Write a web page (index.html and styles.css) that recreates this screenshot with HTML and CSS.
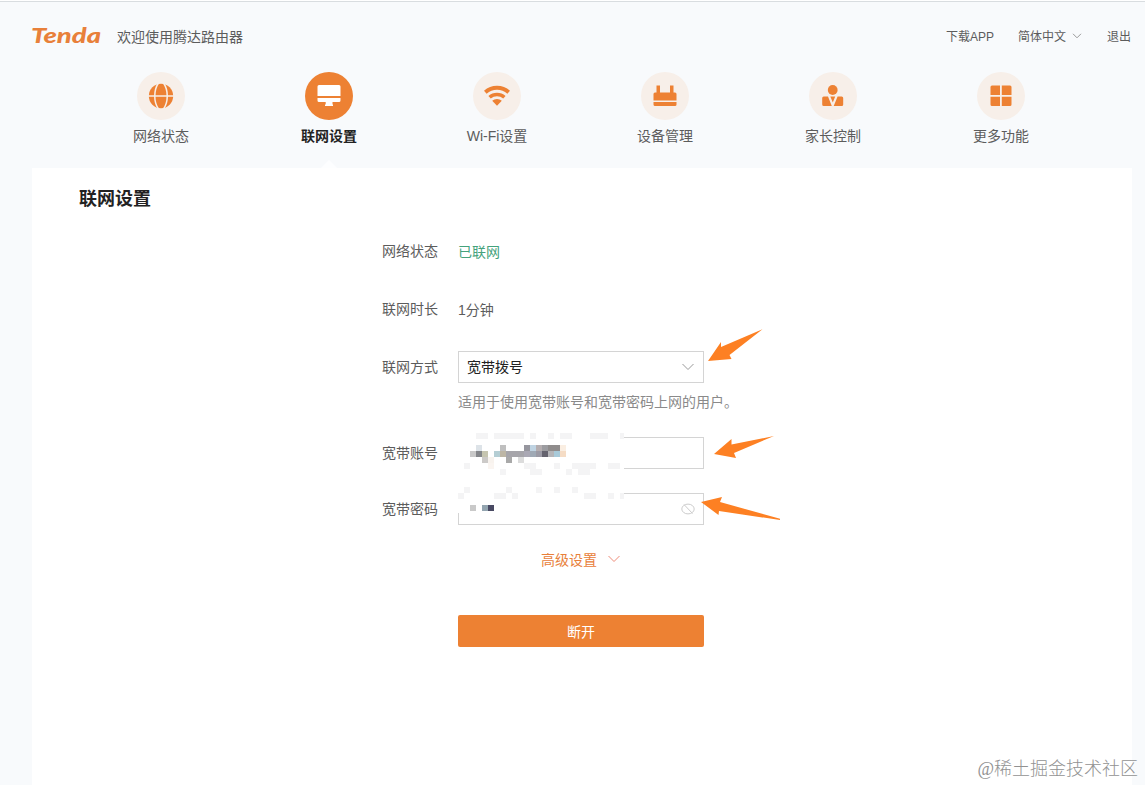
FILE: index.html
```html
<!DOCTYPE html>
<html lang="zh-CN">
<head>
    <meta charset="UTF-8">
    <title>Tenda</title>
    <link rel="stylesheet" href="styles.css">
</head>
<body>
    <header class="header">
        <svg class="logo" width="72" height="22" viewBox="0 0 72 22">
            <text x="0" y="18" textLength="70" lengthAdjust="spacingAndGlyphs">Tenda</text>
        </svg>
        <span class="welcome">欢迎使用腾达路由器</span>
        <div class="header-links">
            <a class="link-app">下载APP</a>
            <a class="link-lang">简体中文
                <svg width="10" height="6" viewBox="0 0 10 6"><path d="M1 .8l4 4 4-4"/></svg>
            </a>
            <a class="link-exit">退出</a>
        </div>
    </header>

    <nav class="nav">
        <a class="nav-item">
            <span class="nav-icon">
                <svg width="26" height="26" viewBox="0 0 26 26">
                    <circle cx="13" cy="13" r="12.2" fill="#ed8133"/>
                    <path d="M0 13h26M10.500 0C5.500 7 5.500 19 10.500 26M15.500 0C20.500 7 20.500 19 15.500 26" fill="none" stroke="#f7efe9" stroke-width="1.500"/>
                </svg>
            </span>
            <span class="nav-text">网络状态</span>
        </a>
        <a class="nav-item active">
            <span class="nav-icon">
                <svg width="26" height="26" viewBox="0 0 26 26" fill="#fff">
                    <path d="M3 2h20a1.500 1.500 0 0 1 1.500 1.500V13h-23V3.500A1.500 1.500 0 0 1 3 2zM1.500 15h23v2.500A1.500 1.500 0 0 1 23 19h-6.500v2.500h.5v1.500H9v-1.500h.7V19H3a1.500 1.500 0 0 1-1.500-1.500z"/>
                </svg>
            </span>
            <span class="nav-text">联网设置</span>
        </a>
        <a class="nav-item">
            <span class="nav-icon">
                <svg width="26" height="26" viewBox="0 0 26 26" fill="none" stroke="#ed8133">
                    <path d="M1.300 9.300a17.500 17.500 0 0 1 23.400 0" stroke-width="4"/>
                    <path d="M5.600 14.300a11 11 0 0 1 14.800 0" stroke-width="3.500"/>
                    <path d="M8.200 17.800a7 7 0 0 1 9.600 0L13 22.800z" fill="#ed8133" stroke="none"/>
                </svg>
            </span>
            <span class="nav-text">Wi-Fi设置</span>
        </a>
        <a class="nav-item">
            <span class="nav-icon">
                <svg width="26" height="26" viewBox="0 0 26 26" fill="#ed8133">
                    <path d="M4.500 2.500h3.500V9.500h10V2.500h3.500V9.500h1.500q1.500 0 1.500 1.500v6.500h-23V11q0-1.500 1.500-1.500h1.500zM1.500 19h23v2.500q0 1.500-1.500 1.500H3q-1.500 0-1.500-1.500z"/>
                </svg>
            </span>
            <span class="nav-text">设备管理</span>
        </a>
        <a class="nav-item">
            <span class="nav-icon">
                <svg width="26" height="26" viewBox="0 0 26 26" fill="#ed8133">
                    <circle cx="12.700" cy="7" r="4.900"/>
                    <path d="M3.700 13.500h4.300l3.800 9.500H3.700q-1.500 0-1.500-1.500V15q0-1.500 1.500-1.500zM17.600 13.500h4.100q1.500 0 1.500 1.500v6.500q0 1.500-1.500 1.500h-8zM10.300 13.500h4.900l-2.400 6z"/>
                </svg>
            </span>
            <span class="nav-text">家长控制</span>
        </a>
        <a class="nav-item">
            <span class="nav-icon">
                <svg width="26" height="26" viewBox="0 0 26 26" fill="#ed8133">
                    <path d="M4 2.500h8V12H2.500V4q0-1.500 1.500-1.500zM13.800 2.500H22q1.500 0 1.500 1.500v8h-9.700zM2.500 13.700H12V23H4q-1.500 0-1.500-1.500zM13.800 13.700h9.700v7.800q0 1.500-1.500 1.500h-8.200z"/>
                </svg>
            </span>
            <span class="nav-text">更多功能</span>
        </a>
    </nav>

    <main class="panel">
        <h2>联网设置</h2>
        <form class="form">
            <div class="form-group">
                <label>网络状态</label>
                <span class="value online">已联网</span>
            </div>
            <div class="form-group">
                <label>联网时长</label>
                <span class="value">1分钟</span>
            </div>
            <div class="form-group with-hint">
                <label>联网方式</label>
                <div class="control">
                    <span class="selected">宽带拨号</span>
                    <svg width="12" height="8" viewBox="0 0 12 8"><path d="M.5 1L6 6.500 11.500 1"/></svg>
                    <svg class="arrow arrow-mode" width="58" height="36" viewBox="0 0 58 36"><path d="M0 33L13 14V19L54.500 1.300L21.500 27L23.500 31z"/></svg>
                </div>
            </div>
            <p class="hint">适用于使用宽带账号和宽带密码上网的用户。</p>
            <div class="form-group account">
                <label>宽带账号</label>
                <div class="control">
                    <svg class="arrow arrow-account" width="62" height="26" viewBox="0 0 62 26"><path d="M0 19L17.500 4V9.500L60 1L20 18L22 23z"/></svg>
                </div>
            </div>
            <div class="form-group password">
                <label>宽带密码</label>
                <div class="control">
                    <svg class="eye" width="14" height="12" viewBox="0 0 14 12"><ellipse cx="7" cy="6" rx="6.200" ry="4.900"/><path d="M3 1.500l8.500 9"/></svg>
                    <svg class="arrow arrow-password" width="80" height="28" viewBox="0 0 80 28"><path d="M0 7L21 2L19 7L79 23.800V25L18 16L17.500 20z"/></svg>
                    <svg class="mosaic" id="mosaic" width="166" height="96" shape-rendering="crispEdges"></svg>
                </div>
            </div>
        </form>
        <a class="advanced">高级设置
            <svg width="12" height="8" viewBox="0 0 12 8"><path d="M.5 1L6 6.500 11.500 1"/></svg>
        </a>
        <button type="button">断开</button>
    </main>

    <div class="watermark">@稀土掘金技术社区</div>

    <script src="mosaic.js"></script>
</body>
</html>
```
FILE: styles.css
```css
* {
    margin: 0;
    padding: 0;
    box-sizing: border-box;
}

body {
    position: relative;
    height: 785px;
    overflow: hidden;
    background-color: #f8fafc;
    border-top: 1px solid #fff;
    font-family: "Liberation Sans", "Noto Sans CJK SC", sans-serif;
    font-size: 14px;
    color: #5c5c5c;
}

svg {
    display: block;
    flex: none;
}

.header {
    display: flex;
    align-items: center;
    height: 71px;
    padding: 0 14px 3px 31px;
    border-top: 1px solid #d9dde0;
}

.logo {
    overflow: visible;
}

.logo text {
    font: italic 900 20px Lato, sans-serif;
    fill: #e8803a;
}

.welcome {
    margin-left: 14px;
}

.header-links {
    display: flex;
    margin-left: auto;
    font-size: 12px;
}

.link-lang {
    display: flex;
    align-items: center;
    gap: 6px;
    margin: 0 25px 0 24px;
}

.link-lang svg {
    fill: none;
    stroke: #999;
}

.nav {
    display: flex;
    height: 96px;
    padding-left: 77px;
}

.nav-item {
    position: relative;
    display: flex;
    flex-direction: column;
    align-items: center;
    width: 168px;
}

.nav-icon {
    display: flex;
    align-items: center;
    justify-content: center;
    width: 48px;
    height: 48px;
    border-radius: 50%;
    background: #f7efe9;
}

.nav-text {
    margin-top: 6px;
    line-height: 20px;
}

.active .nav-icon {
    background: #ed8133;
}

.active .nav-text {
    color: #222;
    font-weight: 700;
}

.active::after {
    content: "";
    position: absolute;
    bottom: 0;
    border: 8px solid transparent;
    border-top: 0;
    border-bottom-color: #fdfeff;
}

.panel {
    height: 617px;
    margin: 0 13px 0 32px;
    padding: 18px 47px;
    background: #fff;
}

h2 {
    font-size: 18px;
    line-height: 26px;
    color: #222;
}

.form {
    margin: 23px 0 0 284px;
}

.form-group {
    display: flex;
    align-items: center;
    height: 32px;
    margin-bottom: 26px;
}

.form-group label {
    width: 95px;
    padding: 0 0 2px 19px;
    white-space: nowrap;
}

.online {
    color: #45a27c;
}

.form-group.with-hint,
.form-group.password {
    margin-bottom: 0;
}

.form-group.account {
    margin-bottom: 24px;
}

.control {
    position: relative;
    display: flex;
    align-items: center;
    justify-content: space-between;
    width: 246px;
    height: 32px;
    padding: 0 9px 0 8px;
    border: 1px solid #d4d4d4;
    color: #222;
}

.selected {
    padding-bottom: 2px;
}

.control > svg {
    fill: none;
    stroke: #999;
}

.hint {
    height: 54px;
    padding: 9px 0 0 95px;
    line-height: 20px;
    color: #8a8a8a;
}

.control .eye {
    margin: 0 -1px 0 auto;
    stroke: #ccc;
}

.control .arrow {
    position: absolute;
    fill: #fd8023;
    stroke: none;
}

.arrow-mode {
    left: 249px;
    top: -24px;
}

.arrow-account {
    left: 255px;
    top: -3px;
}

.arrow-password {
    left: 242px;
    top: 1px;
}

.control .mosaic {
    position: absolute;
    left: -1px;
    top: -61px;
    stroke: none;
}

.advanced {
    display: flex;
    align-items: center;
    gap: 11px;
    height: 20px;
    margin: 24px 0 0 462px;
    color: #e8803a;
}

.advanced svg {
    fill: none;
    stroke: #ee8b78;
}

button {
    display: block;
    width: 246px;
    height: 32px;
    margin: 46px 0 0 379px;
    border: none;
    border-radius: 2px;
    background: #ed8133;
    color: #fff;
    font: inherit;
}

.watermark {
    position: absolute;
    right: 7px;
    bottom: 3px;
    font-family: "Liberation Serif", "Noto Sans CJK SC", serif;
    font-size: 18px;
    font-weight: 300;
    line-height: 26px;
    color: #929292;
}
```
FILE: mosaic.js
```js
// [column, row, width, colour], in cells of 6px
const light = '#f4f4f5';
const cells = [
    [3, 0, 2, light], [6, 0, 5, light], [12, 0, 1, light], [15, 0, 1, light],
    [17, 0, 2, light], [22, 0, 3, light], [27, 0, 1, light],
    [3, 2, 1, '#dde3e8'], [7, 2, 1, '#bfbfbf'], [11, 2, 1, '#96969e'], [12, 2, 1, '#bfd3e2'],
    [13, 2, 1, '#b5aeb0'], [14, 2, 1, '#9c9ca0'], [15, 2, 2, '#8f8c8c'], [17, 2, 1, '#faeee2'],
    [2, 3, 1, '#c8c8c8'], [3, 3, 1, '#84868a'], [4, 3, 1, '#c6c5b0'], [6, 3, 1, '#b5ced4'],
    [7, 3, 1, '#bdb6a5'], [8, 3, 3, '#a6a5aa'], [11, 3, 1, '#aaa8b4'], [12, 3, 1, '#9fa9b5'],
    [13, 3, 1, '#9b9aa5'], [14, 3, 1, '#65636e'], [15, 3, 1, '#b5b5b8'], [16, 3, 1, '#a8cad9'],
    [17, 3, 1, '#f5dcc5'],
    [4, 4, 1, '#cccac8'], [5, 4, 1, '#f8f3ee'], [8, 4, 1, '#a9a9a9'], [10, 4, 1, '#dcdcdc'],
    [1, 5, 1, light], [5, 5, 1, '#faf5f1'], [11, 5, 2, light], [16, 5, 1, light],
    [19, 5, 4, light], [25, 5, 2, light],
    [7, 6, 1, light], [12, 6, 2, light], [18, 6, 1, light], [20, 6, 2, light],
    [1, 9, 1, light], [8, 9, 1, light], [13, 9, 1, light], [16, 9, 1, light], [19, 9, 1, light],
    [0, 10, 1, light], [6, 10, 2, light], [9, 10, 1, light], [21, 10, 2, light],
    [25, 10, 1, light], [27, 10, 1, light],
    [2, 12, 1, '#c9c9c9'], [4, 12, 1, '#93a5b0'], [5, 12, 1, '#494a63']
];

const mosaic = document.getElementById('mosaic');

function addCell(x, y, width, height, fill) {
    const rect = document.createElementNS('http://www.w3.org/2000/svg', 'rect');
    rect.setAttribute('x', x);
    rect.setAttribute('y', y);
    rect.setAttribute('width', width);
    rect.setAttribute('height', height);
    rect.setAttribute('fill', fill);
    mosaic.appendChild(rect);
}

addCell(0, 0, 166, 80, '#fff');
cells.forEach(([col, row, width, fill]) => addCell(col * 6, row * 6, width * 6, 6, fill));
```
